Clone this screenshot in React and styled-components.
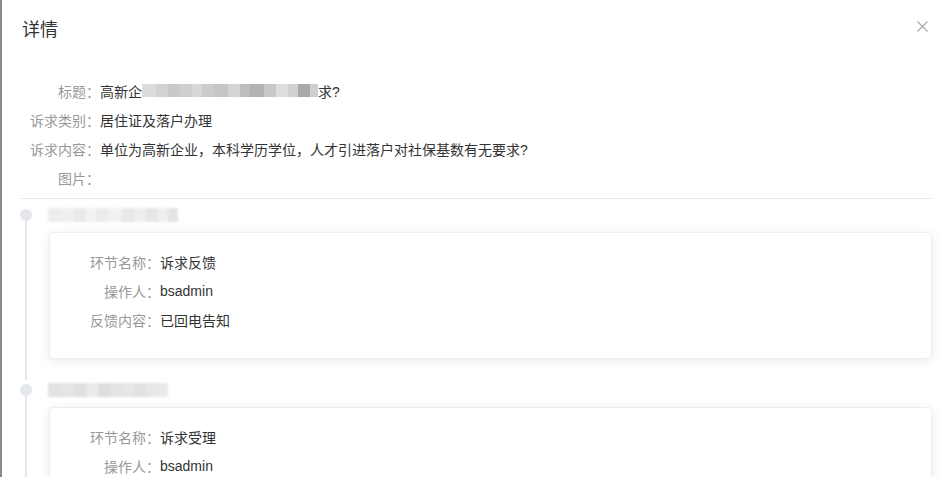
import styled, { createGlobalStyle } from "styled-components";

const GlobalStyle = createGlobalStyle`
  html, body {
    margin: 0;
    padding: 0;
    height: 100%;
    overflow: hidden;
    background: #8a8a8a;
  }
  body {
    font-family: "Liberation Sans", "Noto Sans CJK SC", sans-serif;
    font-size: 14px;
  }
`;

const Drawer = styled.div`
  margin-left: 2px;
  height: 477px;
  background: #fff;
  overflow: hidden;
  box-sizing: border-box;
`;

const Header = styled.div`
  display: flex;
  justify-content: space-between;
  align-items: center;
  padding: 20px 22px 0 20px;
  height: 20px;
`;

const Title = styled.span`
  font-size: 18px;
  line-height: 20px;
  color: #333;
`;

const Close = styled.button`
  display: flex;
  align-items: center;
  justify-content: center;
  width: 16px;
  height: 16px;
  margin-top: -8px;
  padding: 0;
  border: none;
  background: none;
  cursor: pointer;
`;

const Body = styled.div`
  padding: 36px 20px 0 18px;
`;

const Row = styled.div`
  display: flex;
  align-items: center;
  height: 29px;
  white-space: nowrap;
`;

const Label = styled.span`
  width: ${(p) => p.$width}px;
  flex-shrink: 0;
  text-align: right;
  color: #999;
`;

const Value = styled.span`
  display: flex;
  align-items: center;
  color: #333;
`;

const Divider = styled.div`
  margin-top: 6px;
  margin-left: 1px;
  border-top: 1px solid #e6e6e6;
`;

const Timeline = styled.div`
  margin-top: 6px;
`;

const Item = styled.div`
  display: grid;
  grid-template-columns: 28px 1fr;
`;

const Rail = styled.div`
  display: flex;
  flex-direction: column;
  align-items: center;
  width: 12px;
`;

const Dot = styled.div`
  width: 12px;
  height: 12px;
  margin-top: 4px;
  border-radius: 50%;
  background: #e4e7ed;
  flex-shrink: 0;
`;

const Tail = styled.div`
  flex: 1;
  width: 2px;
  background: #e4e7ed;
`;

const Content = styled.div`
  padding-bottom: 21px;
`;

const Stamp = styled.div`
  display: flex;
  align-items: center;
  height: 20px;
`;

const Mosaic = styled.span`
  display: inline-flex;
  align-items: center;
  height: ${(p) => p.$h}px;
  filter: blur(${(p) => p.$blur}px);
`;

const Cell = styled.span`
  display: inline-block;
  width: ${(p) => p.$w}px;
  height: 100%;
  background: ${(p) => p.$c};
`;

const Card = styled.div`
  margin-top: 7px;
  margin-left: 1px;
  padding: 14px 20px 24px 20px;
  border: 1px solid #ebeef5;
  border-radius: 4px;
  background: #fff;
  box-shadow: 0 2px 12px 0 rgba(0, 0, 0, 0.08);
`;

const titleCells = [
  ["#dcdcdc", 14], ["#d2d2d2", 12], ["#c9c9c9", 12], ["#cfcfcf", 12],
  ["#d8d8d8", 10], ["#cccccc", 12], ["#c6c6c6", 14], ["#d4d4d4", 12],
  ["#bdbdbd", 10], ["#b3b3b3", 14], ["#c8c8c8", 12], ["#dddddd", 12],
  ["#d0d0d0", 10], ["#a9a9a9", 12], ["#cfcfcf", 8],
];

const stampCells1 = [
  ["#ededed", 14], ["#f0f0f0", 12], ["#e9e9e9", 12], ["#f3f3f3", 10],
  ["#ececec", 12], ["#f1f1f1", 14], ["#e8e8e8", 12], ["#eeeeee", 12],
  ["#e6e6e6", 12], ["#efefef", 10], ["#e4e4e4", 10],
];

const stampCells2 = [
  ["#e2e2e2", 14], ["#e5e5e5", 12], ["#e0e0e0", 12], ["#eaeaea", 12],
  ["#dedede", 12], ["#e3e3e3", 12], ["#e6e6e6", 12], ["#e1e1e1", 12],
  ["#e7e7e7", 12], ["#e9e9e9", 10],
];

const steps = [
  {
    cells: stampCells1,
    rows: [
      ["环节名称：", "诉求反馈"],
      ["操作人：", "bsadmin"],
      ["反馈内容：", "已回电告知"],
    ],
  },
  {
    cells: stampCells2,
    rows: [
      ["环节名称：", "诉求受理"],
      ["操作人：", "bsadmin"],
    ],
  },
];

function CloseIcon() {
  return (
    <svg width="11" height="11" viewBox="0 0 11 11">
      <path d="M0.5 0.5 L10.5 10.5 M10.5 0.5 L0.5 10.5" stroke="#a3a6ad" strokeWidth="1.1" fill="none" />
    </svg>
  );
}

function Cells({ list, h, blur }) {
  return (
    <Mosaic $h={h} $blur={blur}>
      {list.map(([c, w], i) => (
        <Cell key={i} $c={c} $w={w} />
      ))}
    </Mosaic>
  );
}

export default function App() {
  return (
    <>
      <GlobalStyle />
      <Drawer>
        <Header>
          <Title>详情</Title>
          <Close>
            <CloseIcon />
          </Close>
        </Header>
        <Body>
          <Row>
            <Label $width={80}>标题：</Label>
            <Value>
              高新企
              <Cells list={titleCells} h={13} blur={0.6} />
              求?
            </Value>
          </Row>
          <Row>
            <Label $width={80}>诉求类别：</Label>
            <Value>居住证及落户办理</Value>
          </Row>
          <Row>
            <Label $width={80}>诉求内容：</Label>
            <Value>单位为高新企业，本科学历学位，人才引进落户对社保基数有无要求?</Value>
          </Row>
          <Row>
            <Label $width={80}>图片：</Label>
          </Row>
          <Divider />
          <Timeline>
            {steps.map((s, i) => (
              <Item key={i}>
                <Rail>
                  <Dot />
                  <Tail />
                </Rail>
                <Content>
                  <Stamp>
                    <Cells list={s.cells} h={14} blur={1.2} />
                  </Stamp>
                  <Card>
                    {s.rows.map(([l, v]) => (
                      <Row key={l}>
                        <Label $width={90}>{l}</Label>
                        <Value>{v}</Value>
                      </Row>
                    ))}
                  </Card>
                </Content>
              </Item>
            ))}
          </Timeline>
        </Body>
      </Drawer>
    </>
  );
}
